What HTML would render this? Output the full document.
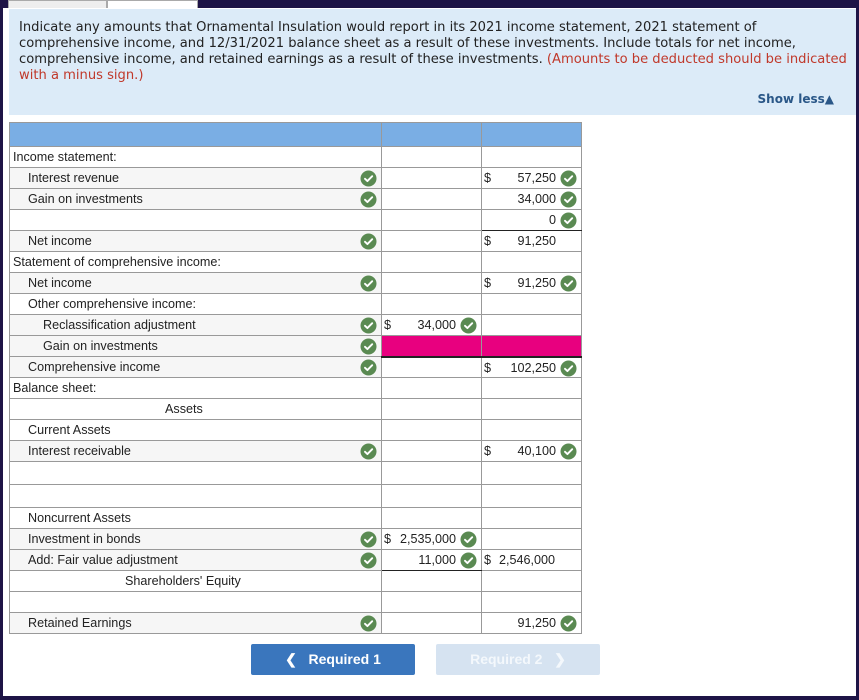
<!DOCTYPE html>
<html><head><meta charset="utf-8"><style>
*{margin:0;padding:0;box-sizing:border-box}
body{width:859px;height:700px;background:#1e1446;position:relative;overflow:hidden;font-family:"Liberation Sans",Arial,sans-serif}
#main{position:absolute;left:3px;top:8px;width:853px;height:688px;background:#fff}
.tab1{position:absolute;left:8px;top:0;width:99px;height:8px;background:#eee;border:1px solid #aaa;border-bottom:none}
.tab2{position:absolute;left:107px;top:0;width:91px;height:8px;background:#fff;border:1px solid #aaa;border-bottom:none}
#q{position:absolute;left:9px;top:9px;width:847px;height:106px;background:#dcebf8;padding:11px 2px 10px 10px;font-family:"DejaVu Sans",Verdana,sans-serif;font-size:13.1px;line-height:16px;color:#222}
#q .r{color:#c0392b}
#show{position:absolute;right:22px;bottom:8px;font-weight:bold;font-size:12px;color:#2a5788}
table{position:absolute;left:9px;top:122px;border-collapse:collapse;font-size:12.6px;color:#222}
td{border:1px solid #999;height:21px;padding:0;position:relative;white-space:nowrap}
td.l{width:372px}
td.c{width:100px}
tr.h td{background:#7aaee4;height:24px}
tr.g td.l{background:#f6f6f6}
.i0{padding-left:3px}.i1{padding-left:18px}.i2{padding-left:33px}
.ck{position:absolute;top:2px;width:17px;height:17px}
td.l .ck{right:4px}
.d{position:absolute;left:2px;top:3px}
.v{position:absolute;right:25px;top:3px}
.pk{background:#e8007f!important}
.btn{position:absolute;top:644px;width:164px;height:31px;border-radius:2px;color:#fff;font-weight:bold;font-size:14px;text-align:center;line-height:31px}
</style></head><body>
<div class="tab1"></div><div class="tab2"></div>
<div id="main"></div>
<div id="q">Indicate any amounts that Ornamental Insulation would report in its 2021 income statement, 2021 statement of comprehensive income, and 12/31/2021 balance sheet as a result of these investments. Include totals for net income, comprehensive income, and retained earnings as a result of these investments. <span class="r">(Amounts to be deducted should be indicated with a minus sign.)</span>
<div id="show">Show less&#9650;</div></div>
<svg width="0" height="0" style="position:absolute"><defs><symbol id="k" viewBox="0 0 17 17"><circle cx="8.5" cy="8.5" r="8" fill="#5a8a52"/><path d="M5 8.8l2.4 2.3 4.8-4.9" stroke="#fff" stroke-width="1.9" fill="none" stroke-linecap="round" stroke-linejoin="round"/></symbol></defs></svg>
<table>
<tr class="h"><td class="l"></td><td class="c"></td><td class="c"></td></tr>
<tr><td class="l i0">Income statement:</td><td></td><td></td></tr>
<tr class="g"><td class="l i1">Interest revenue<svg class="ck"><use href="#k"/></svg></td><td></td><td><span class="d">$</span><span class="v">57,250</span><svg class="ck" style="right:4px"><use href="#k"/></svg></td></tr>
<tr class="g"><td class="l i1">Gain on investments<svg class="ck"><use href="#k"/></svg></td><td></td><td><span class="v">34,000</span><svg class="ck" style="right:4px"><use href="#k"/></svg></td></tr>
<tr><td class="l"></td><td></td><td style="border-bottom:1px solid #222"><span class="v">0</span><svg class="ck" style="right:4px"><use href="#k"/></svg></td></tr>
<tr class="g"><td class="l i1">Net income<svg class="ck"><use href="#k"/></svg></td><td></td><td><span class="d">$</span><span class="v">91,250</span></td></tr>
<tr><td class="l i0">Statement of comprehensive income:</td><td></td><td></td></tr>
<tr class="g"><td class="l i1">Net income<svg class="ck"><use href="#k"/></svg></td><td></td><td><span class="d">$</span><span class="v">91,250</span><svg class="ck" style="right:4px"><use href="#k"/></svg></td></tr>
<tr><td class="l i1">Other comprehensive income:</td><td></td><td></td></tr>
<tr class="g"><td class="l i2">Reclassification adjustment<svg class="ck"><use href="#k"/></svg></td><td><span class="d">$</span><span class="v">34,000</span><svg class="ck" style="right:4px"><use href="#k"/></svg></td><td></td></tr>
<tr class="g"><td class="l i2">Gain on investments<svg class="ck"><use href="#k"/></svg></td><td class="pk" style="border-bottom:2px solid #222"></td><td class="pk" style="border-bottom:2px solid #222"></td></tr>
<tr class="g"><td class="l i1">Comprehensive income<svg class="ck"><use href="#k"/></svg></td><td></td><td><span class="d">$</span><span class="v">102,250</span><svg class="ck" style="right:4px"><use href="#k"/></svg></td></tr>
<tr><td class="l i0">Balance sheet:</td><td></td><td></td></tr>
<tr><td class="l" style="padding-left:155px">Assets</td><td></td><td></td></tr>
<tr><td class="l i1">Current Assets</td><td></td><td></td></tr>
<tr class="g"><td class="l i1">Interest receivable<svg class="ck"><use href="#k"/></svg></td><td></td><td><span class="d">$</span><span class="v">40,100</span><svg class="ck" style="right:4px"><use href="#k"/></svg></td></tr>
<tr><td class="l" style="height:23px"></td><td></td><td></td></tr>
<tr><td class="l" style="height:23px"></td><td></td><td></td></tr>
<tr><td class="l i1">Noncurrent Assets</td><td></td><td></td></tr>
<tr class="g"><td class="l i1">Investment in bonds<svg class="ck"><use href="#k"/></svg></td><td><span class="d">$</span><span class="v">2,535,000</span><svg class="ck" style="right:4px"><use href="#k"/></svg></td><td></td></tr>
<tr class="g"><td class="l i1">Add: Fair value adjustment<svg class="ck"><use href="#k"/></svg></td><td style="border-bottom:1px solid #222"><span class="v">11,000</span><svg class="ck" style="right:4px"><use href="#k"/></svg></td><td><span class="d">$</span><span class="d" style="left:17px">2,546,000</span></td></tr>
<tr><td class="l" style="padding-left:115px">Shareholders' Equity</td><td></td><td></td></tr>
<tr><td class="l"></td><td></td><td></td></tr>
<tr class="g"><td class="l i1">Retained Earnings<svg class="ck"><use href="#k"/></svg></td><td></td><td><span class="v">91,250</span><svg class="ck" style="right:4px"><use href="#k"/></svg></td></tr>
</table>
<div class="btn" style="left:251px;background:#3a76bd">&#10094;&nbsp;&nbsp; Required 1</div>
<div class="btn" style="left:436px;background:#d6e3f1;color:#f4f8fc">Required 2 &nbsp;&nbsp;&#10095;</div>
</body></html>
